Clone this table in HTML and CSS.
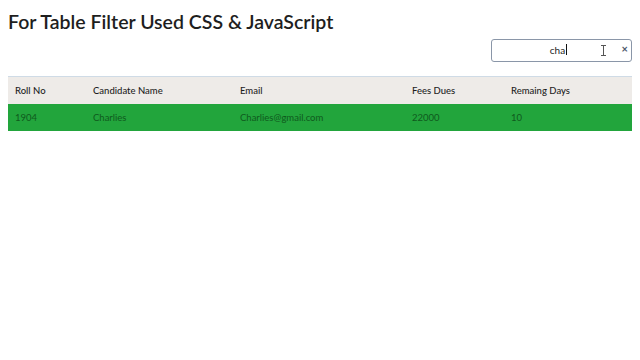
FILE: index.html
```html
<!DOCTYPE html>
<html lang="en">

<head>
    <meta charset="UTF-8">
    <meta name="viewport" content="width=device-width, initial-scale=1.0">
    <title>Table Filter</title>
    <link rel="stylesheet" href="styles.css">
</head>

<body>
    <h1 class="title">For Table Filter Used CSS &amp; JavaScript</h1>
    <div class="search-bar">
        <div class="search-box">
            <input type="text" class="search" value="cha">
            <span class="caret"></span>
            <svg class="ibeam" width="7" height="11" viewBox="0 0 7 11">
                <path d="M1 0.5h5M1 10.5h5M3.5 0.5v10" stroke="#555" stroke-width="1" fill="none" />
            </svg>
            <span class="clear">&times;</span>
        </div>
    </div>
    <table class="data">
        <thead>
            <tr>
                <th class="c1">Roll No</th>
                <th class="c2">Candidate Name</th>
                <th class="c3">Email</th>
                <th class="c4">Fees Dues</th>
                <th class="c5">Remaing Days</th>
            </tr>
        </thead>
        <tbody>
            <tr class="match">
                <td>1904</td>
                <td>Charlies</td>
                <td>Charlies@gmail.com</td>
                <td>22000</td>
                <td>10</td>
            </tr>
        </tbody>
    </table>
</body>

</html>
```

FILE: styles.css
```css
body {
    margin: 8px;
    font-family: Lato, "Open Sans", sans-serif;
    background: #fff;
    color: #222;
}

.title {
    font-size: 19.5px;
    font-weight: 600;
    margin: 2px 0 0 0;
    line-height: 24px;
    color: #1e1e1e;
}

.search-bar {
    display: flex;
    justify-content: flex-end;
    margin-top: 4px;
}

.search-box {
    position: relative;
    width: 141px;
    height: 23px;
}

.search {
    box-sizing: border-box;
    width: 100%;
    height: 100%;
    border: 1px solid #8a96a8;
    border-radius: 3px;
    padding: 0 8px 0 0;
    font-family: Lato, sans-serif;
    font-size: 10px;
    text-align: center;
    color: #222;
    outline: none;
}

.caret {
    position: absolute;
    left: 75px;
    top: 6px;
    width: 1px;
    height: 11px;
    background: #111;
}

.ibeam {
    position: absolute;
    left: 109px;
    top: 7px;
}

.clear {
    position: absolute;
    right: 4px;
    top: 5px;
    font-size: 11px;
    font-weight: 700;
    color: #4a5468;
    line-height: 12px;
}

.data {
    width: 625px;
    margin-top: 15px;
    border-collapse: collapse;
    font-size: 9.5px;
    border-top: 1px solid #cfdbe6;
}

.data th {
    background: #eeebe8;
    text-align: left;
    font-weight: 500;
    color: #1e1e1e;
    height: 27px;
    padding: 0 0 0 7px;
}

.data td {
    height: 27px;
    padding: 0 0 0 7px;
    color: #0f5a1c;
}

.match td {
    background: #22a53c;
}

.c1 { width: 71px; }
.c2 { width: 140px; }
.c3 { width: 165px; }
.c4 { width: 92px; }
```
